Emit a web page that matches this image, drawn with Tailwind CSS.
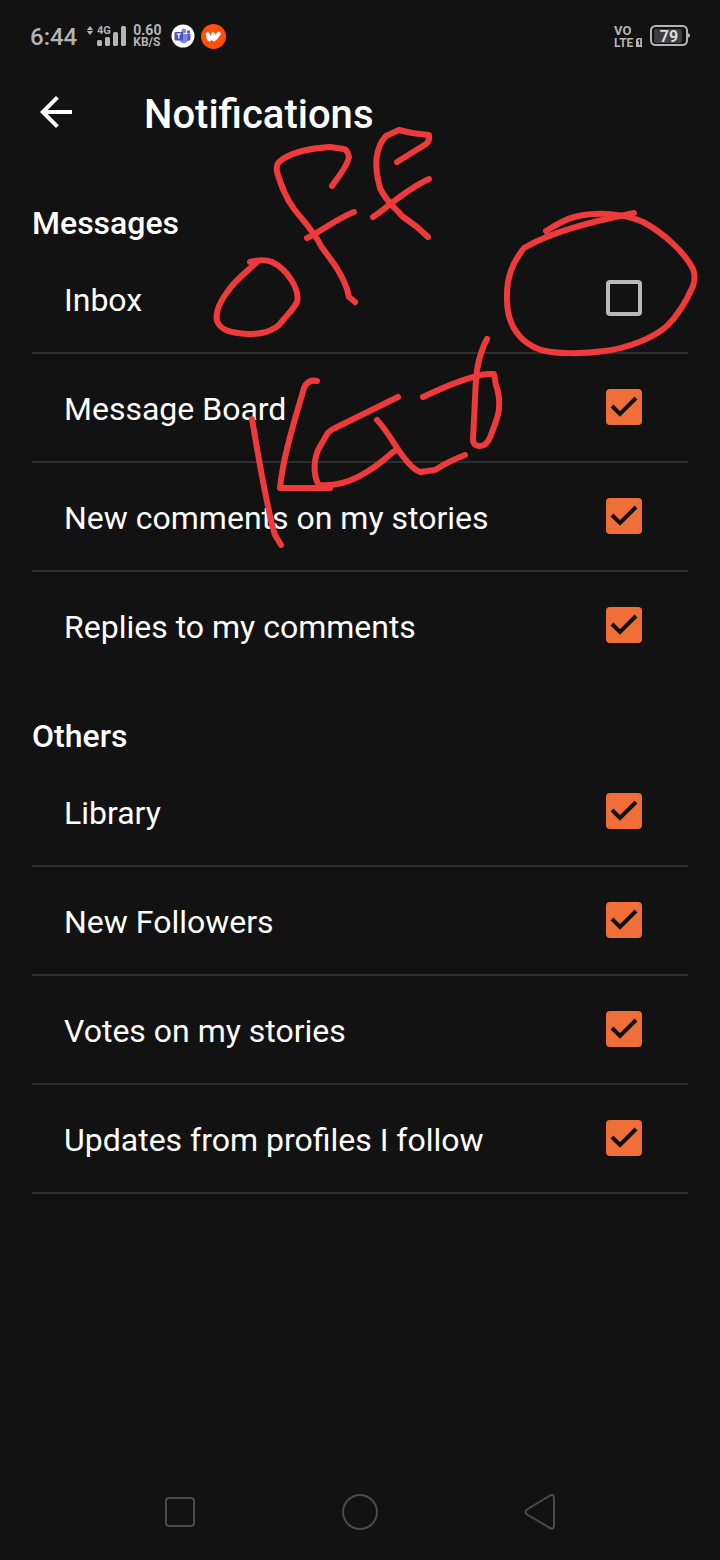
<!DOCTYPE html>
<html lang="en">
<head>
    <meta charset="UTF-8">
    <meta name="viewport" content="width=device-width, initial-scale=1.0">
    <title>Notifications</title>
    <script src="https://cdn.jsdelivr.net/npm/@tailwindcss/browser@4"></script>
</head>
<body class="relative flex flex-col min-h-screen bg-[#121212] text-white font-[Roboto,sans-serif]">
    <!-- Status bar -->
    <div class="flex items-center justify-between h-18 px-[30px] text-[#b4b4b4]">
        <div class="flex items-center">
            <span class="pt-px text-2xl font-medium">6:44</span>
            <svg class="ml-2 w-11 h-6" viewBox="0 0 44 24" fill="currentColor" aria-label="4G signal">
                <path d="M5 2l3.200 4H1.800zM5 11l3.200-4H1.800z"/>
                <text x="12" y="10" font-size="11" font-weight="700">4G</text>
                <rect x="12" y="16" width="5" height="6" rx="1.500"/>
                <rect x="20" y="13" width="5" height="9" rx="1.500"/>
                <rect x="28" y="8" width="5" height="14" rx="1.500"/>
                <rect x="36" y="2" width="5" height="20" rx="1.500"/>
            </svg>
            <div class="ml-1 w-[34px] font-bold">
                <div class="text-sm leading-3">0.60</div>
                <div class="text-xs leading-3">KB/S</div>
            </div>
            <svg class="ml-1 w-6 h-6" viewBox="0 0 24 24" aria-label="Teams">
                <circle cx="12" cy="12" r="11.500" fill="#fff"/>
                <circle cx="17.500" cy="8" r="1.700" fill="#5059c9"/>
                <circle cx="12.800" cy="7" r="2.400" fill="#7b83eb"/>
                <path d="M15 10h4.500v4.500a2.500 2.500 0 0 1-4.500 1.500z" fill="#5059c9"/>
                <path d="M9 10h7.500v5.500a3.700 3.700 0 0 1-7.500 0z" fill="#7b83eb"/>
                <rect x="3.500" y="8" width="8.500" height="8.500" rx="1" fill="#4b53bc"/>
                <path d="M5.700 10.200h4.200M7.800 10.200v4.400" stroke="#fff" stroke-width="1.200"/>
            </svg>
            <svg class="ml-[6px] w-[25px] h-[25px]" viewBox="0 0 25 25" aria-label="Wattpad">
                <circle cx="12.500" cy="12.500" r="12.500" fill="#ff500a"/>
                <path d="M6.800 10.200c.2 2.500.6 4 1.500 5.200 1.500-.8 2.800-3 4-5-.4 2-.2 3.600.5 4.800 2-.9 3.500-3.300 5-5.600" fill="none" stroke="#fff" stroke-width="4" stroke-linecap="round" stroke-linejoin="round"/>
            </svg>
        </div>
        <div class="flex items-center gap-2">
            <svg class="w-7 h-7" viewBox="0 0 28 28" fill="currentColor" font-size="13" font-weight="700" aria-label="VoLTE">
                <text x="0" y="13">VO</text>
                <text x="0" y="25" font-size="12">LTE</text>
                <path d="M23.500 16H28v9h-6v-7.500z"/>
                <path d="M24 19l1.500-1v5" fill="none" stroke="#121212" stroke-width="1.300"/>
            </svg>
            <svg class="w-10 h-6" viewBox="0 0 40 24" aria-label="Battery 79%">
                <rect x="4" y="5" width="28" height="14" rx="2" fill="#3e3e3e"/>
                <rect x="1" y="2" width="36" height="19" rx="4.500" fill="none" stroke="currentColor" stroke-width="2"/>
                <path d="M38 9l2 1.500v2L38 14z" fill="currentColor"/>
                <text x="19" y="18" font-size="16" font-weight="700" text-anchor="middle" fill="#dcdcdc">79</text>
            </svg>
        </div>
    </div>

    <!-- Header -->
    <header class="flex items-center h-20 px-8">
        <button type="button" aria-label="Back" class="w-12 h-12">
            <svg class="w-12 h-12" viewBox="0 0 24 24" fill="currentColor">
                <path d="M20 11H7.830l5.590-5.590L12 4l-8 8 8 8 1.410-1.410L7.830 13H20v-2z"/>
            </svg>
        </button>
        <h1 class="ml-16 pt-[6px] text-[40px] font-medium">Notifications</h1>
    </header>

    <main class="flex-grow px-8">
        <section class="mt-[47px]">
            <h2 class="pt-[2px] text-[32px] leading-[44px] font-medium">Messages</h2>
            <ul>
                <li class="flex items-center justify-between h-[109px] pl-8 pr-[46px] pb-[2px] border-b-2 border-[#2e2e2e]">
                    <label for="inbox" class="pt-1 text-[32px]">Inbox</label>
                    <input id="inbox" type="checkbox" class="appearance-none w-9 h-9 rounded-sm border-4 border-[#b9b9b9]">
                </li>
                <li class="flex items-center justify-between h-[109px] pl-8 pr-[46px] pb-[2px] border-b-2 border-[#2e2e2e]">
                    <label for="board" class="pt-1 text-[32px]">Message Board</label>
                    <span class="grid">
                        <input id="board" type="checkbox" checked class="col-start-1 row-start-1 appearance-none w-9 h-9 rounded-sm bg-[#f06f38]">
                        <svg class="col-start-1 row-start-1 w-9 h-9 pointer-events-none" viewBox="0 0 36 36" fill="none" stroke="#121212" stroke-width="4"><path d="M6 17l8 8L30 9"/></svg>
                    </span>
                </li>
                <li class="flex items-center justify-between h-[109px] pl-8 pr-[46px] pb-[2px] border-b-2 border-[#2e2e2e]">
                    <label for="comments" class="pt-1 text-[32px]">New comments on my stories</label>
                    <span class="grid">
                        <input id="comments" type="checkbox" checked class="col-start-1 row-start-1 appearance-none w-9 h-9 rounded-sm bg-[#f06f38]">
                        <svg class="col-start-1 row-start-1 w-9 h-9 pointer-events-none" viewBox="0 0 36 36" fill="none" stroke="#121212" stroke-width="4"><path d="M6 17l8 8L30 9"/></svg>
                    </span>
                </li>
                <li class="flex items-center justify-between h-[109px] pl-8 pr-[46px] pb-[2px] border-b-2 border-transparent">
                    <label for="replies" class="pt-1 text-[32px]">Replies to my comments</label>
                    <span class="grid">
                        <input id="replies" type="checkbox" checked class="col-start-1 row-start-1 appearance-none w-9 h-9 rounded-sm bg-[#f06f38]">
                        <svg class="col-start-1 row-start-1 w-9 h-9 pointer-events-none" viewBox="0 0 36 36" fill="none" stroke="#121212" stroke-width="4"><path d="M6 17l8 8L30 9"/></svg>
                    </span>
                </li>
            </ul>
        </section>

        <section class="mt-[31px]">
            <h2 class="pt-[2px] text-[32px] leading-[44px] font-medium">Others</h2>
            <ul>
                <li class="flex items-center justify-between h-[109px] pl-8 pr-[46px] pb-[2px] border-b-2 border-[#2e2e2e]">
                    <label for="library" class="pt-1 text-[32px]">Library</label>
                    <span class="grid">
                        <input id="library" type="checkbox" checked class="col-start-1 row-start-1 appearance-none w-9 h-9 rounded-sm bg-[#f06f38]">
                        <svg class="col-start-1 row-start-1 w-9 h-9 pointer-events-none" viewBox="0 0 36 36" fill="none" stroke="#121212" stroke-width="4"><path d="M6 17l8 8L30 9"/></svg>
                    </span>
                </li>
                <li class="flex items-center justify-between h-[109px] pl-8 pr-[46px] pb-[2px] border-b-2 border-[#2e2e2e]">
                    <label for="followers" class="pt-1 text-[32px]">New Followers</label>
                    <span class="grid">
                        <input id="followers" type="checkbox" checked class="col-start-1 row-start-1 appearance-none w-9 h-9 rounded-sm bg-[#f06f38]">
                        <svg class="col-start-1 row-start-1 w-9 h-9 pointer-events-none" viewBox="0 0 36 36" fill="none" stroke="#121212" stroke-width="4"><path d="M6 17l8 8L30 9"/></svg>
                    </span>
                </li>
                <li class="flex items-center justify-between h-[109px] pl-8 pr-[46px] pb-[2px] border-b-2 border-[#2e2e2e]">
                    <label for="votes" class="pt-1 text-[32px]">Votes on my stories</label>
                    <span class="grid">
                        <input id="votes" type="checkbox" checked class="col-start-1 row-start-1 appearance-none w-9 h-9 rounded-sm bg-[#f06f38]">
                        <svg class="col-start-1 row-start-1 w-9 h-9 pointer-events-none" viewBox="0 0 36 36" fill="none" stroke="#121212" stroke-width="4"><path d="M6 17l8 8L30 9"/></svg>
                    </span>
                </li>
                <li class="flex items-center justify-between h-[109px] pl-8 pr-[46px] pb-[2px] border-b-2 border-[#2e2e2e]">
                    <label for="updates" class="pt-1 text-[32px]">Updates from profiles I follow</label>
                    <span class="grid">
                        <input id="updates" type="checkbox" checked class="col-start-1 row-start-1 appearance-none w-9 h-9 rounded-sm bg-[#f06f38]">
                        <svg class="col-start-1 row-start-1 w-9 h-9 pointer-events-none" viewBox="0 0 36 36" fill="none" stroke="#121212" stroke-width="4"><path d="M6 17l8 8L30 9"/></svg>
                    </span>
                </li>
            </ul>
        </section>
    </main>

    <!-- System navigation -->
    <nav class="grid grid-cols-3 items-center justify-items-center h-24 px-[12.5%] text-[#4a4a4a]">
        <button type="button" aria-label="Recent apps">
            <svg class="w-10 h-10" viewBox="0 0 40 40" fill="none" stroke="currentColor" stroke-width="2"><rect x="6" y="6" width="28" height="28" rx="3"/></svg>
        </button>
        <button type="button" aria-label="Home">
            <svg class="w-10 h-10" viewBox="0 0 40 40" fill="none" stroke="currentColor" stroke-width="2"><circle cx="20" cy="20" r="17"/></svg>
        </button>
        <button type="button" aria-label="Back">
            <svg class="w-10 h-10" viewBox="0 0 40 40" fill="none" stroke="currentColor" stroke-width="2"><path d="M30 3.500L7 17.500q-3 2.500 0 5L30 36q4 1.500 4-2V6q0-4-4-2.500z"/></svg>
        </button>
    </nav>

    <!-- Pen marks drawn over the screen -->
    <svg class="absolute top-0 left-0 w-[720px] h-[600px] pointer-events-none" viewBox="0 0 720 600" fill="none" stroke="#ee3a3b" stroke-width="6" stroke-linecap="round" stroke-linejoin="round">
        <path d="M250 262C258 260 267 260 272 262C287 269 300 289 297 302C294 309 286 316 279 325C269 333 259 334 248 334C232 333 221 331 217 321C215 311 221 300 228 291C236 279 249 270 257 262"/>
        <path d="M332 186C340 174 347 167 349 157Q347 149 344 149L330 147C313 148 290 152 279 162Q276 165 277 172C281 185 285 197 294 209C306 224 315 233 321 246C330 259 341 271 347 289L349 297L355 302M307 238C322 231 336 219 354 212"/>
        <path d="M397 162L426 144Q430 141 429 135L412 133L399 130L386 136C374 149 375 170 380 188C386 202 396 208 402 216L417 227L428 237M373 217C388 207 405 190 429 179"/>
        <path d="M546 231C561 222 571 215 595 214C611 213 630 216 643 222C664 233 685 253 693 269Q696 277 693 286C687 300 678 315 667 326C652 339 627 348 605 351C583 354 555 354 541 350C520 343 507 325 507 300C506 277 513 262 524 248C551 232 590 222 634 213"/>
        <path d="M252 419C259 461 267 509 275 535L281 545M317 381Q308 379 304 388C296 416 283 456 280 488H330"/>
        <path d="M398 397L335 428Q328 431 326 436L318 450C312 465 315 480 319 485C345 488 371 472 393 452L397 450M377 420C386 429 394 444 402 455Q412 469 420 472L435 470Q449 461 465 455"/>
        <path d="M423 397C444 387 469 376 488 374H494L496 385Q500 396 499 408C499 416 494 426 491 435Q487 446 480 446Q472 446 473 437C475 410 475 383 477 370Q480 352 487 339"/>
    </svg>
</body>
</html>
